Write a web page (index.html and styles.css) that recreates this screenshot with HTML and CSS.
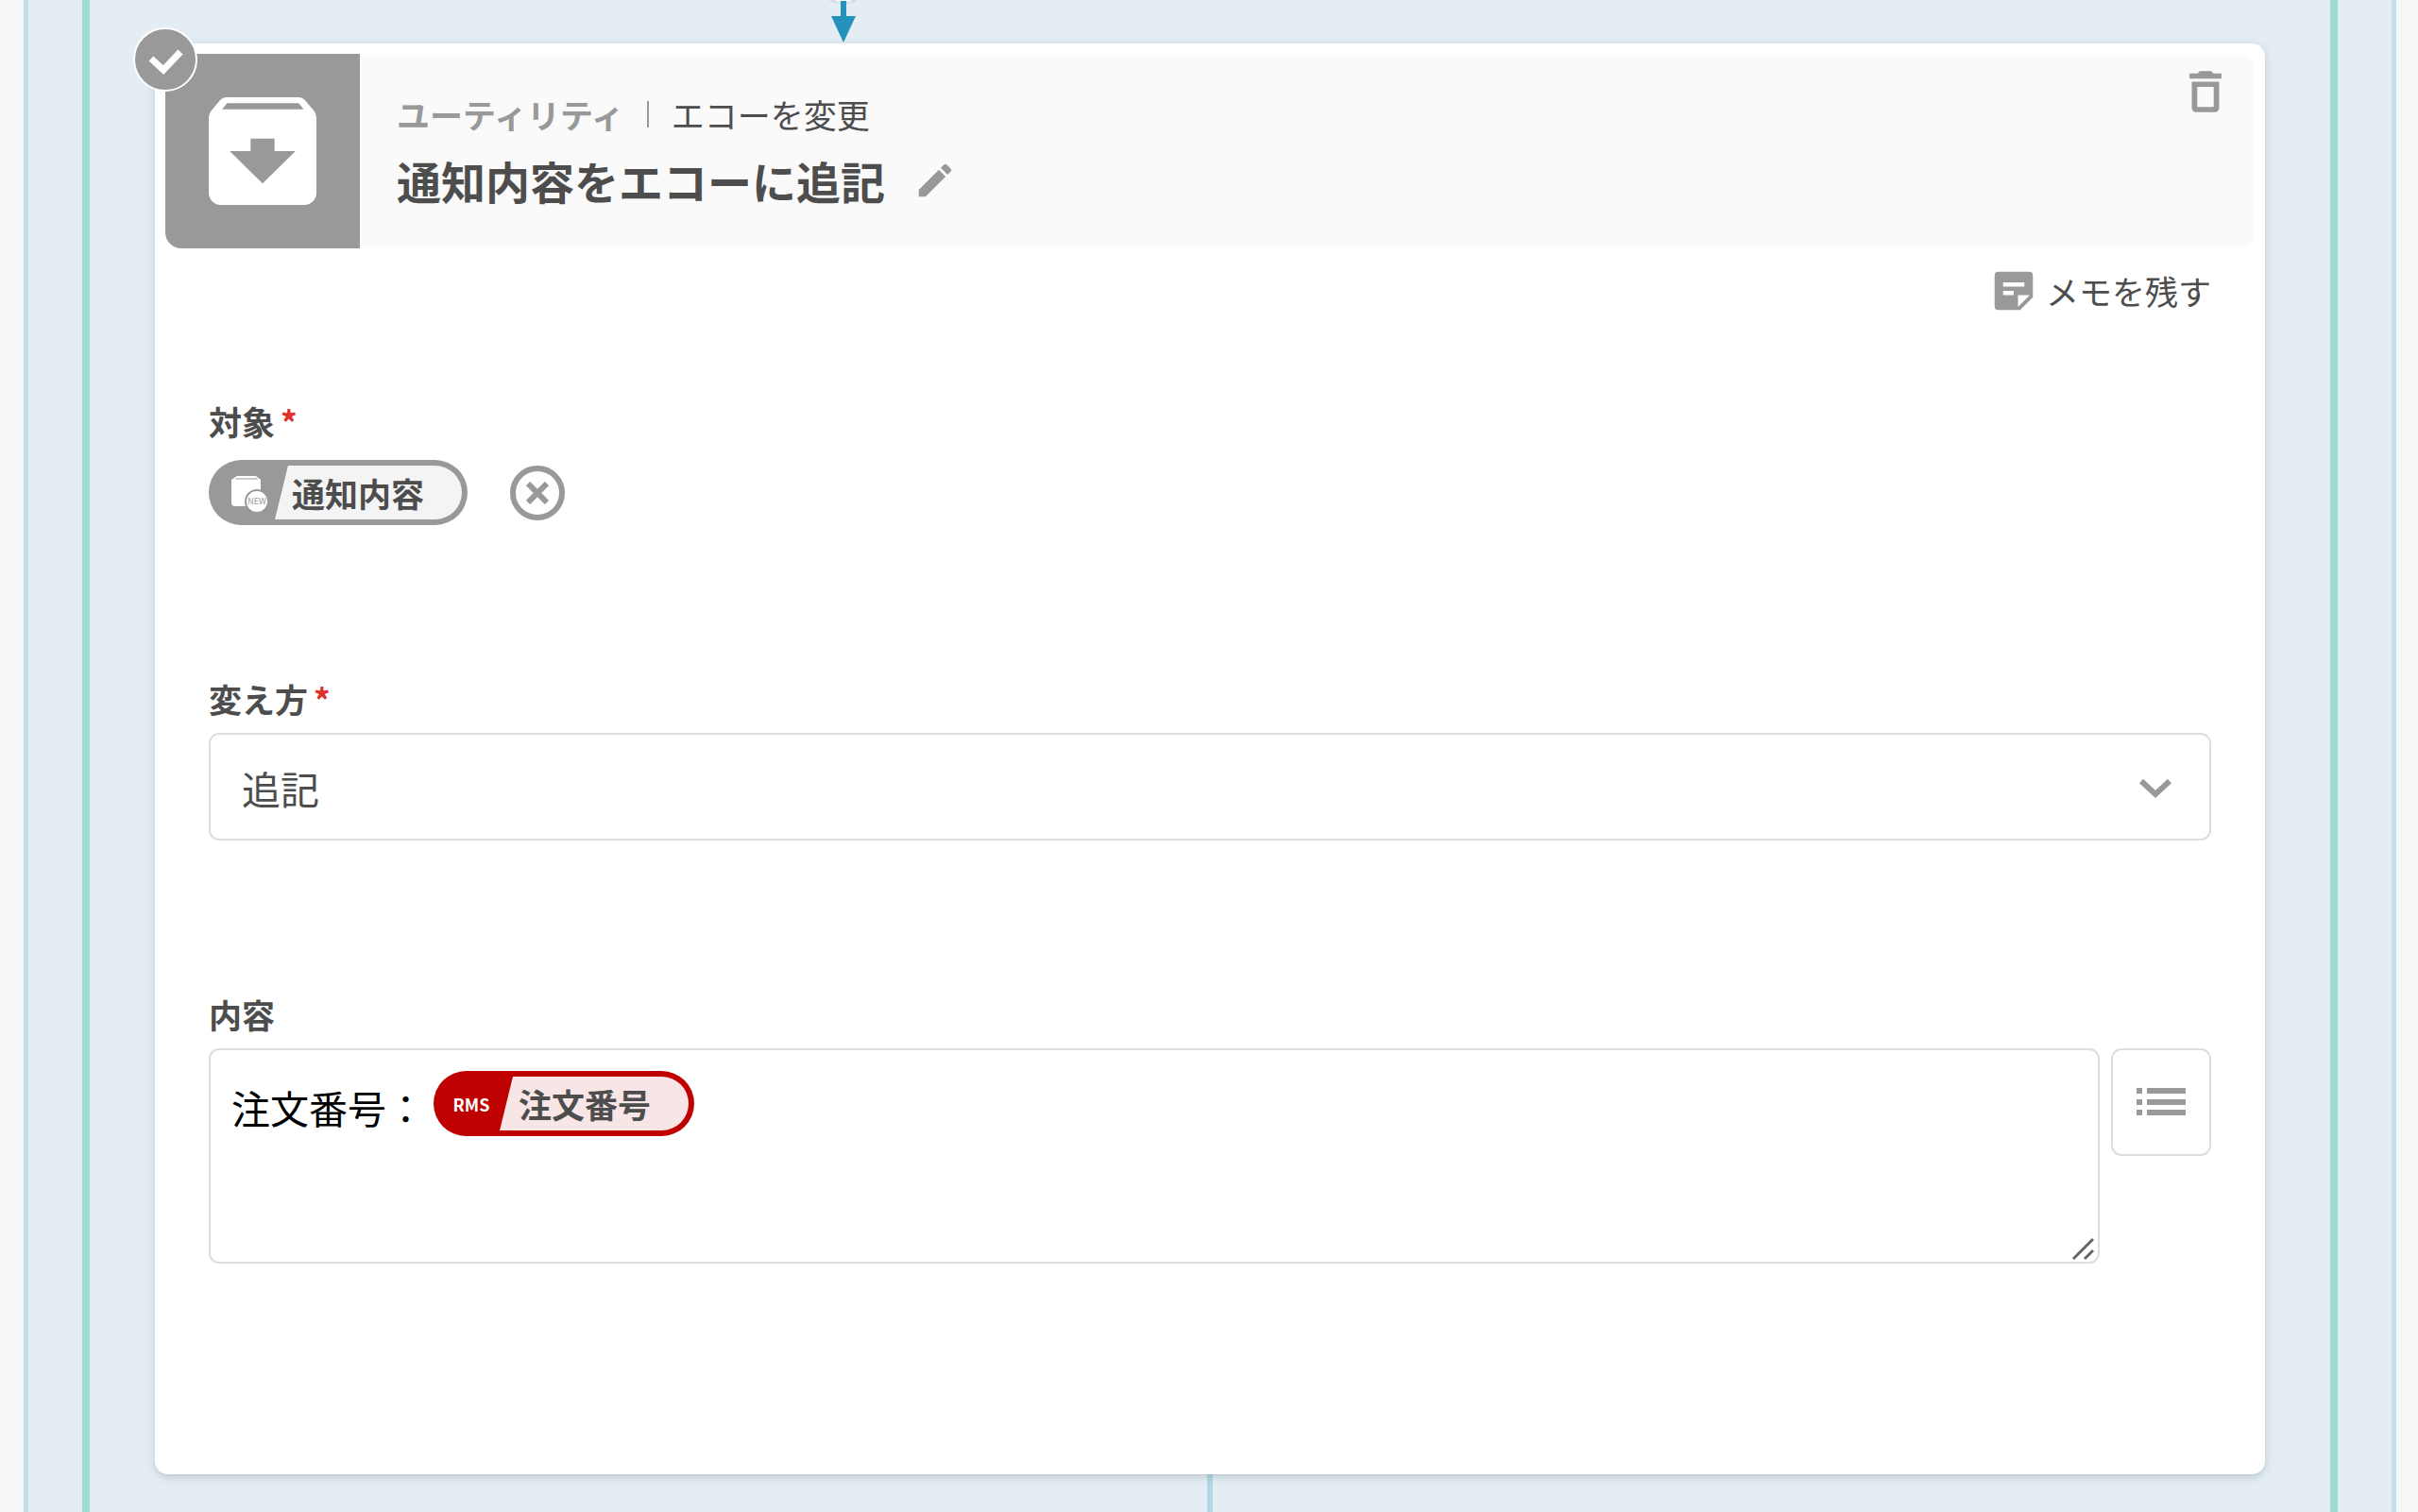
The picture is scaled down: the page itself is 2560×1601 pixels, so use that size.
FILE: index.html
```html
<!DOCTYPE html>
<html lang="ja">
  <head>
    <meta charset="UTF-8" />
    <meta name="viewport" content="width=device-width, initial-scale=1.0" />
    <title>通知内容をエコーに追記</title>
    <link rel="stylesheet" href="styles.css">
  </head>
  <body>
    <div class="flow-outer">
      <div class="flow-inner">
        <div class="connector-top">
          <svg class="arrow" width="28" height="46" viewBox="0 0 28 46">
            <ellipse cx="14" cy="-5" rx="22" ry="9" fill="#c9d3d9" opacity="0.6" />
            <path d="M6 0h16v2H6z" fill="#f4f6f6" />
            <path d="M11 1h6v16h10L14 45 1 17h10z" fill="#2492ba" />
          </svg>
        </div>

        <main class="card">
          <span class="status-badge">
            <svg width="64" height="64" viewBox="0 0 64 64">
              <path d="M17 31l13 12 18-19" fill="none" stroke="#fff" stroke-width="7" />
            </svg>
          </span>

          <header class="card-header">
            <div class="card-icon">
              <svg width="152" height="152" viewBox="0 0 24 24" fill="#fff">
                <path d="M20.54 5.23l-1.39-1.68C18.88 3.21 18.47 3 18 3H6c-.47 0-.88.21-1.16.55L3.46 5.23C3.17 5.57 3 6.02 3 6.5V19c0 1.1.9 2 2 2h14c1.1 0 2-.9 2-2V6.5c0-.48-.17-.93-.46-1.27zM12 17.4L6.5 12H10V9.9h4V12h3.5L12 17.4zM5.24 5l.81-1h12l.83 1H5.24z" />
              </svg>
            </div>
            <div class="card-heading">
              <div class="breadcrumb">
                <span class="category">ユーティリティ</span>
                <span class="divider"></span>
                <span>エコーを変更</span>
              </div>
              <div class="title-row">
                <h1>通知内容をエコーに追記</h1>
                <button class="icon-btn" type="button" aria-label="名前を編集">
                  <svg width="46" height="46" viewBox="0 0 24 24" fill="#999">
                    <path d="M3 17.25V21h3.75L17.81 9.94l-3.75-3.75L3 17.25zM20.71 7.04c.39-.39.39-1.02 0-1.41l-2.34-2.34c-.39-.39-1.02-.39-1.41 0l-1.83 1.83 3.75 3.75 1.83-1.83z" />
                  </svg>
                </button>
              </div>
            </div>
            <button class="icon-btn delete-btn" type="button" aria-label="削除">
              <svg width="58" height="58" viewBox="0 0 24 24" fill="#999">
                <path d="M6 19c0 1.1.9 2 2 2h8c1.1 0 2-.9 2-2V7.700H6V19zm2.400-9.100h7.200v8.800H8.400V9.900zM15.500 4l-1-1h-5l-1 1H5v2.300h14V4h-3.500z" />
              </svg>
            </button>
          </header>

          <form class="card-body">
            <button class="memo-btn" type="button">
              <svg width="54" height="54" viewBox="0 0 24 24" fill="#999">
                <path d="M19.500 3h-15C3.700 3 3 3.700 3 4.500v15c0 .8.700 1.500 1.500 1.500H15l6-6V4.500c0-.8-.7-1.500-1.500-1.500zM7 8h10v2H7V8zm5 6H7v-2h5v2zm2 5.500V14h5.500L14 19.500z" />
              </svg>
              メモを残す
            </button>

            <div class="field">
              <div class="label">対象<span class="required">*</span></div>
              <div class="target-row">
                <span class="chip">
                  <span class="chip-icon">
                    <svg width="44" height="44" viewBox="0 0 44 44">
                      <path d="M10 4h20l5 4v24a4 4 0 0 1-4 4H8a4 4 0 0 1-4-4V8z" fill="#fff" />
                      <path d="M9 6h22l1 2H8z" fill="#ccc" />
                      <circle cx="31" cy="31" r="12" fill="#fff" stroke="#999" stroke-width="2" />
                      <text x="31" y="34" text-anchor="middle" class="new-text">NEW</text>
                    </svg>
                  </span>
                  <span class="chip-text">通知内容</span>
                </span>
                <button class="clear-btn" type="button" aria-label="対象を解除">
                  <svg width="24" height="24" viewBox="0 0 24 24">
                    <path d="M2 2l20 20M22 2L2 22" stroke="#999" stroke-width="6" />
                  </svg>
                </button>
              </div>
            </div>

            <div class="field">
              <label class="label" for="method">変え方<span class="required">*</span></label>
              <div class="select-wrap">
                <select id="method">
                  <option>追記</option>
                </select>
                <svg class="chevron" width="36" height="24" viewBox="0 0 36 24">
                  <path d="M3 4l15 14L33 4" fill="none" stroke="#999" stroke-width="6" />
                </svg>
              </div>
            </div>

            <div class="field">
              <div class="label" id="content-label">内容</div>
              <div class="content-row">
                <div class="editor-wrap">
                  <div class="editor" contenteditable="true" role="textbox" aria-multiline="true" aria-labelledby="content-label" spellcheck="false">
                    <span>注文番号：</span>
                    <span class="chip chip-rms" contenteditable="false">
                      <span class="chip-icon">RMS</span>
                      <span class="chip-text">注文番号</span>
                    </span>
                  </div>
                  <svg class="resizer" width="26" height="26" viewBox="0 0 26 26">
                    <path d="M2 24L23 3M14 24l9-9" stroke="#666" stroke-width="3" />
                  </svg>
                </div>
                <button class="list-btn" type="button" aria-label="項目を選択">
                  <svg width="54" height="30" viewBox="0 0 54 30" fill="#999">
                    <path d="M1 0h6v6H1zM1 12h6v6H1zM1 23h6v6H1zM12 0h41v6H12zM12 12h41v6H12zM12 23h41v6H12z" />
                  </svg>
                </button>
              </div>
            </div>
          </form>
        </main>

        <div class="connector-bottom"></div>
      </div>
    </div>
  </body>
</html>
```
FILE: styles.css
```css
* {
  box-sizing: border-box;
}
body {
  margin: 0;
  padding: 0 23px 0 25px;
  background: #f4f6f7;
  font-family: "Noto Sans CJK JP", sans-serif;
  font-size: 35px;
  color: #4d4d4d;
}
button,
select {
  font: inherit;
  color: inherit;
}
svg {
  display: block;
}
.flow-outer {
  padding: 0 57px;
  background: #e4edf4;
  border-left: 5px solid #c4deea;
  border-right: 5px solid #c4deea;
}
.flow-inner {
  min-height: 100vh;
  padding: 0 69px;
  border-left: 8px solid #9edcd1;
  border-right: 8px solid #9edcd1;
  display: flex;
  flex-direction: column;
}
.connector-top {
  height: 46px;
  padding-left: 32%;
}
.connector-bottom {
  flex: 1;
  min-height: 40px;
  width: 6px;
  align-self: center;
  background: #b3d8e4;
}

/* card */
.card {
  position: relative;
  padding: 11px 11px 223px;
  background: white;
  border-radius: 14px;
  box-shadow: 0 3px 8px rgba(40, 70, 80, 0.22);
}
.status-badge {
  position: absolute;
  top: -17px;
  left: -23px;
  border: 2px solid white;
  border-radius: 50%;
  background: #999;
}
.card-header {
  display: flex;
  background: #fafafa;
  border-radius: 17px;
  overflow: hidden;
}
.card-icon {
  width: 206px;
  height: 206px;
  background: #999;
  display: flex;
  align-items: center;
  justify-content: center;
}
.card-heading {
  flex: 1;
  padding: 36px 39px 0;
}
.breadcrumb {
  display: flex;
  align-items: center;
  gap: 24px;
  line-height: 56px;
}
.category {
  color: #999;
  font-weight: bold;
}
.divider {
  width: 2px;
  height: 28px;
  background: #999;
}
.title-row {
  display: flex;
  align-items: center;
  gap: 30px;
}
h1 {
  margin: 0;
  font-size: 47px;
  line-height: 84px;
}
.icon-btn {
  padding: 0;
  border: none;
  background: none;
  cursor: pointer;
}
.delete-btn {
  align-self: flex-start;
  margin: 11px 23px 0 0;
}

/* form */
.card-body {
  padding: 18px 46px 0;
  display: flex;
  flex-direction: column;
}
.memo-btn {
  display: flex;
  align-items: center;
  gap: 7px;
  align-self: flex-end;
  margin-bottom: 86px;
  padding: 0;
  border: none;
  background: none;
  line-height: 54px;
  cursor: pointer;
}
.field + .field {
  margin-top: 159px;
}
.label {
  display: block;
  margin-bottom: 11px;
  font-weight: bold;
  line-height: 50px;
}
.required {
  margin-left: 6px;
  color: #e0302a;
}
.target-row {
  display: flex;
  align-items: center;
  gap: 45px;
  height: 74px;
  padding-top: 5px;
}
.chip {
  display: inline-flex;
  height: 69px;
  padding: 6px 6px 6px 0;
  border-radius: 35px;
  background: #999;
  font-weight: bold;
  color: #4d4d4d;
}
.chip-icon {
  width: 70px;
  padding-left: 14px;
  display: flex;
  align-items: center;
  justify-content: center;
}
.chip-text {
  padding: 0 40px 0 18px;
  line-height: 58px;
  border-radius: 0 29px 29px 0;
  background: #f4f4f4;
  clip-path: polygon(14px 0, 100% 0, 100% 100%, 0 100%);
}
.new-text {
  font-size: 9px;
  font-weight: normal;
  fill: #999;
}
.chip-rms {
  background: #bf0000;
}
.chip-rms .chip-icon {
  padding-left: 10px;
  font-size: 18px;
  color: white;
}
.chip-rms .chip-text {
  padding-left: 20px;
  background: #f8e6e6;
}
.clear-btn {
  width: 58px;
  height: 58px;
  padding: 0;
  border: 6px solid #999;
  border-radius: 50%;
  background: none;
  display: flex;
  align-items: center;
  justify-content: center;
  cursor: pointer;
}
.select-wrap {
  position: relative;
}
select {
  display: block;
  width: 100%;
  height: 114px;
  padding: 2px 100px 0 33px;
  border: 2px solid #ddd;
  border-radius: 11px;
  background: white;
  appearance: none;
  font-size: 41px;
}
.chevron {
  position: absolute;
  right: 41px;
  top: 47px;
  pointer-events: none;
}
.content-row {
  display: flex;
  align-items: flex-start;
  gap: 12px;
}
.editor-wrap {
  position: relative;
  flex: 1;
}
.editor {
  min-height: 228px;
  padding: 22px;
  border: 2px solid #ddd;
  border-radius: 11px;
  outline: none;
  display: flex;
  align-items: flex-start;
  gap: 9px;
  color: black;
  font-size: 41px;
  line-height: 76px;
}
.editor .chip {
  font-size: 35px;
}
.resizer {
  position: absolute;
  right: 4px;
  bottom: 3px;
}
.list-btn {
  width: 106px;
  height: 114px;
  padding: 0;
  border: 2px solid #ddd;
  border-radius: 11px;
  background: white;
  display: flex;
  align-items: center;
  justify-content: center;
  cursor: pointer;
}
```
